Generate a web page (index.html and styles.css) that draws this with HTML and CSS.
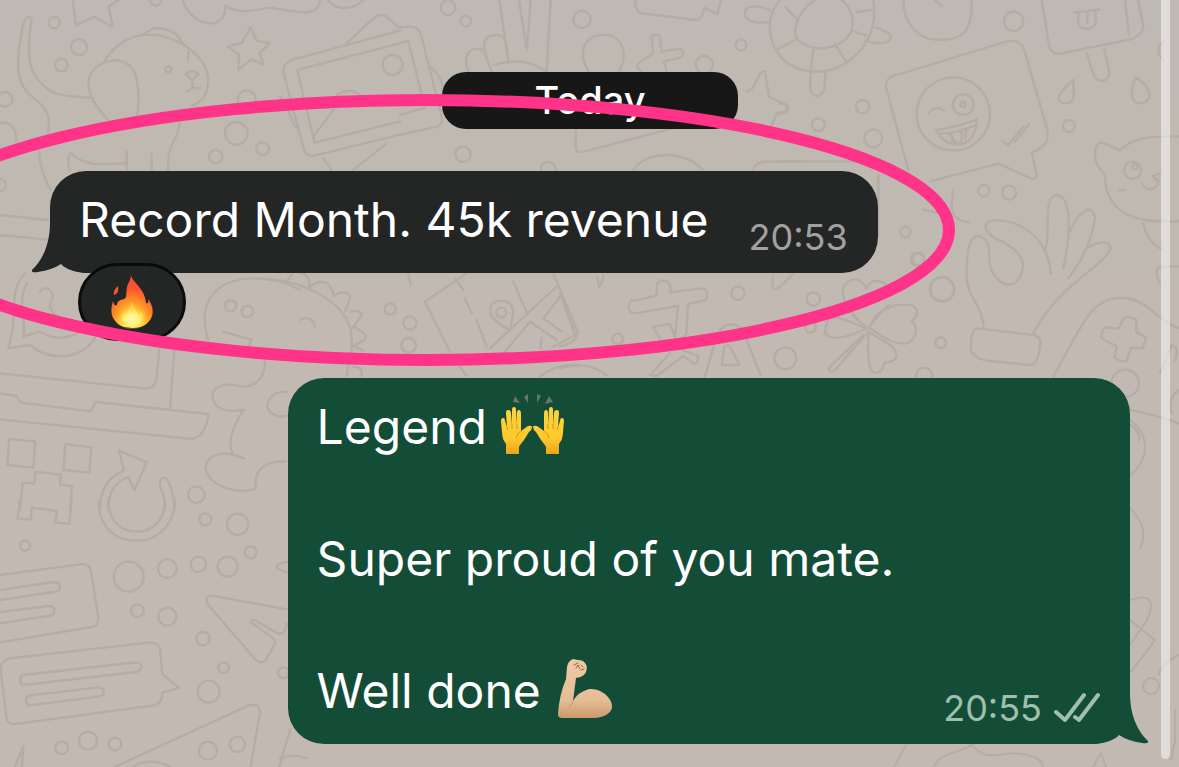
FILE: index.html
```
<!DOCTYPE html>
<html lang="en">
<head>
    <meta charset="UTF-8">
    <meta name="viewport" content="width=device-width, initial-scale=1.0">
    <title>Chat</title>
    <link rel="stylesheet" href="styles.css">
</head>
<body>
    <!-- wallpaper -->
    <svg class="wallpaper" width="1179" height="767" viewBox="0 0 1179 767" aria-hidden="true">
        <!-- dog, stars, picture frame -->
        <g transform="scale(.3333)">
            <path d="M218 0l10 76 55-26 55 30-12-60 30-20M548 0c15 45 50 70 85 70 30 0 45-25 42-52 50 25 80 15 130 5 60 5 150 40 155-23M985 0c25 35 75 30 105 0"/>
            <path d="M95 58c-10-20-25 0-30 40-20 100-15 160 35 195 50 40 50 60 45 110M95 58c-10 60-15 120 5 160 40 70 80 70 178 76M310 190c30-60 90-85 130-86 100 0 185 70 185 140 0 40-20 60-50 75M435 102c30-30 90-20 115 30M325 360c-60-60-80-120-35-160 50-35 110-20 120 40 10 50 5 70 2 110M117 455c5 60 20 90 35 115M210 513c-8-25-8-50 5-53 30 40 100 35 167 28M380 455v58M455 462v50M540 370c-10 60-40 60-35 143"/>
            <path d="M752 82l17 40 40 8-30 28 12 36-38-16-38 32 2-46-33-24 42-12z"/>
            <path d="M565 155v25M557 222c12-12 28-12 38 0l-18 20zM577 242v15M560 275c10-2 15-8 17-18 5 8 12 12 25 6"/>
            <path d="M1200 92L880 178q-35 12-28 45l60 225q8 25 35 18l253-62M1200 130L892 210l52 218 256-64M1040 130l80-75q25-20 45 0l35 30M840 290c30 30 25 60 50 95M970 475l25 35M1060 510l100-80M0 368q50-5 48 55M0 645l145 15M0 705l140 14M940 410l60-80M1010 285q40-25 70 0"/>
            <circle cx="163" cy="68" r="17"/><circle cx="237" cy="141" r="24"/><circle cx="184" cy="195" r="19"/><circle cx="15" cy="298" r="22"/><circle cx="505" cy="208" r="9"/><circle cx="0" cy="555" r="18"/>
            <circle cx="1178" cy="195" r="30"/><circle cx="740" cy="298" r="27"/><circle cx="709" cy="400" r="34"/><circle cx="647" cy="470" r="20"/><circle cx="788" cy="446" r="19"/><circle cx="467" cy="0" r="17"/>
        </g>
        <!-- victory hand, plus, plane -->
        <g transform="translate(400 0) scale(.3333)">
            <path d="M0 82c50-8 60 5 65 30l60 240q8 25-25 30L0 405M0 128l25-5 50 200-75 22M85 195q60 50 40 110"/>
            <path d="M298 0l28 190M357 0l24 150L392 0M452 0l-12 215M275 215c-25-60-40-110 15-110 30 0 30 30 35 80M250 150c-60-20-60 50-40 70M280 195c70-20 120-10 155 18M565 212c-40-65 0-108 45-108 60 0 75 60 48 108"/>
            <path d="M705 0q0 35 20 40l165 20q20-5 22-37l40 20L963 0M755 115c0-15 25-15 25 0l5 40 50-8c20-2 15 25 5 26l-48 12 8 27M715 190l45-30-5-45M725 213q-20-10-10-23"/>
            <path d="M1095 215c-20-10-28 60-55 60M1095 215l12 75 50 25q20 15-25 25l-30 60M527 390v55q5 15 25 10l260-68M700 510c40-60 150-60 210 0M1060 510q5-25 40-25h100M423 512c-5-35 45-35 45 0"/>
            <circle cx="144" cy="23" r="22"/><circle cx="198" cy="63" r="16"/><circle cx="546" cy="58" r="26"/><circle cx="913" cy="194" r="26"/><circle cx="1023" cy="135" r="16"/><circle cx="189" cy="463" r="23"/>
        </g>
        <!-- turtle, smiley bubble, ice cream, bear -->
        <g transform="translate(780 0) scale(.3333)">
            <path d="M280 0c20 130-80 215-170 215S-35 150-30 70C-30 40-15 20 0 0M45 95C50 30 110-20 160-10s70 70 50 110-80 50-110 43S45 120 45 95zM15 20l38 40M230 36l48-6M215 92l42 14M165 132l32 50M100 148l-8 64M45 120L-12 150M-30 30c-50-20-80-10-75 15s50 25 75 20M283 82q60 15 47 36t-75 4M92 215l-2 50c5 35 40 25 42 0l6-52"/>
            <path d="M370 0c0 70 45 122 110 120s98-20 95-120M465 0l22 20M785 0l22 135q5 30 35 25l210-42q40-15 38-40L1075 0M1035 0l12 105M885 38l75-10M895 42v28c5 25 52 20 52-5V32M922 40v28M920 158l20 65c10 30 50 22 48-5l-15-72"/>
            <path d="M385 510L320 270q-10-35 30-45l320-98q45-15 62 20l68 235c8 25 5 60-45 75l15 65q2 20-20 12l-95-43-205 53"/>
            <circle cx="520" cy="342" r="110"/><circle cx="550" cy="314" r="31"/><circle cx="549" cy="313" r="8"/>
            <path d="M447 342c5-20 30-22 45-10M468 390q60-8 122-32c0 95-90 95-122 32zM478 402q60-5 108-26M505 398l20 26M515 398v20c10 20 30 15 30 0v-28M560 385l-5 30M665 422l20 14 45-58M705 425l42-52"/>
            <path d="M880 240c-60 50-50 70-20 70 30-5 20-35 20-70zM1067 232c-20 50-15 80 20 78 45-20 10-60-20-78z"/>
            <path d="M975 525c-50-50-30-110 0-94l45 20c40-40 90-42 177-42M975 525c0 100 70 150 222 138M1090 670c10 50 35 70 60 80M1140 520l-22 8 18 17M1085 548c10 30 50 25 50-10M1150 180q-30-30 0-55"/>
            <circle cx="1058" cy="511" r="26"/><circle cx="1065" cy="500" r="8"/><circle cx="248" cy="320" r="20"/><circle cx="115" cy="374" r="19"/><circle cx="280" cy="415" r="27"/><circle cx="701" cy="64" r="29"/><circle cx="867" cy="378" r="18"/><circle cx="611" cy="572" r="17"/><circle cx="687" cy="578" r="21"/><circle cx="376" cy="696" r="16"/>
            <path d="M0 310c30 0 35 25 0 32M0 484h270M295 525v180M1018 570h20M520 570c-10 60-10 90 50 98M430 630l50 10"/>
        </g>
        <!-- phone bubble, laptop, robot, reload -->
        <g transform="translate(0 240) scale(.3333)">
            <path d="M75 100C20 160 60 210 25 325l65-10c60 50 150 45 195-20M80 130c-30 60 0 100-10 160l50-15c50 30 100 20 130-10M120 155c10-20 40-10 38 20-20 30 0 40 20 60"/>
            <path d="M0 400l440 46q25-2 30-30l8-90M523 332l-13 178M0 460l50 8 12 20 210 26 15-28 338 36q-5 65-50 75L0 538"/>
            <path d="M28 597l78 8-6 78-78-8zM196 612l78 10-6 76-78-8zM60 810l8-83 35 4 4-36 75 9-2 30 36 4-6 72"/>
            <path d="M300 810c0-60 25-100 72-118l-15-60 83 35-36 84-20-40c-50 20-60 60-60 99M523 810c0-50-15-90-30-98-15 2-15 15-12 30 10 20 15 40 15 68"/>
            <path d="M625 300c-30-90 0-180 130-185 60 0 110 15 145 35M795 365c0 40-20 75-70 75-50-15-90 0-88 30 8 50 60 45 95 40-30 40-55 100-30 135l30 10C650 620 610 660 618 690c15 55 110 75 150 55-10-50 25-85 90-80M860 455c-60 0-70 50-45 65s30 10 45 7M670 275l85 25-12 25"/>
            <circle cx="692" cy="197" r="17"/><circle cx="742" cy="214" r="17"/><circle cx="589" cy="764" r="25"/>
        </g>
        <!-- cards, planes, dots -->
        <g transform="translate(0 500) scale(.3333)">
            <path d="M60 0l-8 55 40 4 4-36 75 10-5 35 42 3L215 0M295 0c0 80 50 123 115 123S525 70 525 0M325 0c0 60 35 95 85 95s85-35 85-95"/>
            <path d="M0 225l240-32q30-2 33 20l22 140q0 25-20 28L0 427M0 270l160-24q20 0 20 15t-20 15L0 300M0 336l145-18q20 0 18 15t-20 15L0 370"/>
            <path d="M30 475l420-48q25 0 30 20l7 75 50 42-50 15q0 35-30 38L45 672q-20 2-25-15L2 510q0-30 28-35zM70 525l335-38q20 0 19 15-2 12-16 14L72 555q-10 0-12-14 0-14 10-16zM90 586l205-24q18 0 16 15-1 10-12 12L90 616q-10 0-12-13 0-15 12-17z"/>
            <path d="M860 328L630 286q-15 5-8 25l145 168q18 15 30 2l28-50q0-15-18-25l-55-40q0-10 15-4l65 38q25 6 28-30M345 800l400-183q35-10 35 20l-28 165M870 690l-32 110M860 185q-60 15 0 32M45 800l25-62-5 62M400 800q50-30 110 0M840 775q40-15 80 0"/>
            <circle cx="386" cy="230" r="45"/><circle cx="502" cy="206" r="28"/><circle cx="595" cy="193" r="23"/><circle cx="683" cy="200" r="30"/><circle cx="752" cy="157" r="18"/><circle cx="713" cy="73" r="32"/><circle cx="616" cy="58" r="18"/><circle cx="412" cy="332" r="19"/><circle cx="502" cy="350" r="27"/><circle cx="609" cy="416" r="20"/><circle cx="671" cy="503" r="16"/><circle cx="626" cy="575" r="33"/><circle cx="624" cy="752" r="27"/><circle cx="712" cy="733" r="23"/><circle cx="185" cy="743" r="19"/><circle cx="264" cy="722" r="27"/><circle cx="345" cy="732" r="19"/><circle cx="75" cy="137" r="15"/><circle cx="850" cy="518" r="16"/>
        </g>
        <!-- dino spikes, map -->
        <g transform="translate(180 230) scale(.3333)">
            <path d="M230 145c170 5 290 90 285 190v35M320 155l20-28M360 127c25 10 30 20 28 45M388 172c30-25 60-25 72 20M460 200c25-20 50-15 50 5l-15 40M512 245c30-5 38 5 30 15l-25 35M520 290c40 20 45 30 30 42l-30 15 30 15M360 270c20-12 40-5 45 20M505 405l-5 35M520 410q30 0 25 28"/>
            <path d="M860 130L735 215l75 150M825 145l25 35M855 205l20 45M890 270l30 80M1000 155l40 90M990 300c-75-35-75-85-25-88 50 5 32 50 25 88zM930 355l205-190M975 365l75-90 80 55M1120 130l75 180-75 40M1140 200l-50 65 55 40M840 410l20 28M1085 325l-3 30M685 135l7 28M1080 440q50-40 120-35"/>
            <circle cx="631" cy="237" r="17"/><circle cx="690" cy="279" r="20"/><circle cx="686" cy="346" r="22"/><circle cx="964" cy="248" r="15"/>
        </g>
        <!-- kanji block, clover -->
        <g transform="translate(560 230) scale(.3333)">
            <path d="M225 212l65-15v-30c5-20 35-20 40 0l2 20 95-12q20 0 12 35l-55 12-5 90-30 30M225 250q-20 0-18-22t18-16M225 250l130-22-10 90M278 290l50-8 18 38M278 290l22 35M330 370l-60 65 20 3 80-60 35 25q8-5 10-25l-50-18M435 440l30-105M560 330l42 105M485 405l8-55q12-10 20 5l25 50zM480 300q30-30 60-8M0 190l48 130q0 15-48 30M112 140l5 30q15-20 12-35M640 135q-10 60 20 35l40-38M0 415q80-25 140 20"/>
            <path d="M925 295c-60-40-95-110-65-135 20-20 45-15 60 15 15-35 55-25 65 0M930 290c20-55 80-75 130-62 20 15 10 35-5 45 25 20 10 65-20 68-50 0-75-30-105-45zM925 305c0 50-5 100 15 122 25 8 30-15 35-30 50 0 40-40 0-62zM910 315l-105 100q5 15 18 8l95-110M800 280c5-40 80 0 120 15-40 20-100 45-125 15zM935 280l50-55"/>
            <circle cx="534" cy="190" r="20"/><circle cx="760" cy="207" r="20"/><circle cx="676" cy="385" r="33"/><circle cx="1146" cy="178" r="36"/><circle cx="1142" cy="338" r="16"/><circle cx="1093" cy="438" r="25"/><circle cx="173" cy="327" r="16"/><circle cx="752" cy="292" r="16"/><circle cx="1075" cy="88" r="18"/>
        </g>
        <!-- ok hand, gamepad -->
        <g transform="translate(860 180) scale(.3333)">
            <path d="M370 440c0-60-50-90-50-150 0-50 0-120 35-122 55 10 15 85 50 120 30 40 70 30 80-10 20-60-50-85-60-95-35-10-60-40-42-58 80-20 180 40 190 155M555 210c20-40-10-160 35-165 50 5 40 130 20 220M630 155c30-70 70-85 75-40-15 90-50 140-80 180M670 215c60-50 90-20 80-5-20 50-150 100-230 250M355 445l165 20q25 5 20 30-5 60-30 60l-120-12q-50-5-58-35 0-65 23-63z"/>
            <path d="M580 590c80-140 110-240 205-236 80 0 110 75 172 90M735 442l40 4 15-30q15-12 40 5l-2 34 30 18-10 32-35-2-12 38q-15 10-38-8l8-34q-45-20-48-30 5-20 12-27zM808 690q80 15 149 40M812 735q30 20 25 45M900 580l35-85q25 10 10 45M957 630q-40 30-20 70M900 310q-20-40 0-50h57"/>
            <circle cx="796" cy="610" r="41"/><circle cx="247" cy="327" r="36"/><circle cx="172" cy="238" r="20"/>
        </g>
        <!-- right and bottom edges -->
        <path d="M1130 420c20 15 20 40 0 55M1130 508q20 20 10 40M1130 600q30-10 17 20l-17 25M1130 620l25 20-24 32M1179 655q-20 10-20 20M894 767l12-22M934 767c5-14 20-12 40-23M972 745c15 20 35 3 55 10q15 3 16 12M1093 767l8-14 5 14M1175 710v30l-4 20"/>
        <circle cx="1151" cy="686" r="8"/>
    </svg>

    <main class="chat">
        <div class="day">Today</div>

        <article class="message received">
            <p>Record Month. 45k revenue</p>
            <time class="meta" datetime="20:53">20:53</time>
            <svg class="tail" width="60" height="50" viewBox="0 0 60 50" aria-hidden="true">
                <path d="M20 0C20 20 13 37 2 47Q1 50 8 49Q22 47 31 41Q38 49 58 50L60 0Z"/>
            </svg>
        </article>

        <button class="reaction" aria-label="Fire, 1 reaction">
            <svg width="42" height="54" viewBox="0 0 42 54" aria-hidden="true">
                <defs>
                    <radialGradient id="flame" cx=".5" cy=".95" r=".95">
                        <stop offset="0" stop-color="#fff9c4"/>
                        <stop offset=".22" stop-color="#ffe04a"/>
                        <stop offset=".45" stop-color="#ff9a26"/>
                        <stop offset=".72" stop-color="#fb572e"/>
                        <stop offset="1" stop-color="#f4472f"/>
                    </radialGradient>
                    <radialGradient id="core">
                        <stop offset="0" stop-color="#fffde0"/>
                        <stop offset=".5" stop-color="#fff176"/>
                        <stop offset="1" stop-color="#ffc928" stop-opacity="0"/>
                    </radialGradient>
                </defs>
                <path fill="url(#flame)" d="M20 0C21 7 34 13 35 28C37 29 38 27 37 24C45 34 42 45 34 50C28 54 13 54 7 49C0 43-1 36 2 26C3 29 3 31 6 30C6 26 9 25 13 24C17 23 14 16 17 9C18 6 20 4 20 0Z"/>
                <path fill="#f65330" d="M7 11C8 17 6 19 3 20C2 16 4 14 7 11Z"/>
                <ellipse cx="21" cy="44" rx="15" ry="11" fill="url(#core)"/>
                <path fill="#fff27a" d="M21 26C22 32 26 35 27 40C29 40 30 38 31 36C33 44 29 51 21 52C12 51 10 44 12 38C14 40 15 41 17 41C15 36 20 32 21 26Z" opacity=".4"/>
            </svg>
        </button>

        <article class="message sent">
            <p>Legend <svg class="emoji" width="66" height="62" viewBox="0 0 66 62" role="img" aria-label="raising hands">
                <defs>
                    <linearGradient id="palm" x2="0" y2="1">
                        <stop offset="0" stop-color="#ffd33c"/>
                        <stop offset=".65" stop-color="#ffc92e"/>
                        <stop offset="1" stop-color="#eba51d"/>
                    </linearGradient>
                    <g id="hand">
                        <path fill="url(#palm)" d="M5 60V50Q1 45 1 38L0 27Q0 24 2 24Q4 24 4 27L6 33L5 19Q5 16 7 16Q10 16 10 19L11 31V16Q11 13 13 13Q15 13 15 16L16 31L16 19Q16 16 18 16Q20 16 20 20V37L27 32Q31 31 31 33Q31 36 28 38L23 46Q19 51 18 53V60Z"/>
                        <path fill="none" stroke="#d9951c" stroke-width="1" d="M6 33l1 3M11 30v5M16 30v5M20 37q-4 2-5 7"/>
                    </g>
                </defs>
                <use href="#hand" x="1"/>
                <use href="#hand" transform="translate(64 0) scale(-1 1)"/>
                <path fill="#68746d" d="M15 2l5 7-7-1zM28 0v9l-4-6zM37 0l4 2-4 7zM49 2l4 6-8 2z"/>
            </svg><br><br>Super proud of you mate.<br><br>Well done <svg class="emoji" width="60" height="62" viewBox="0 0 60 62" role="img" aria-label="flexed biceps">
                <defs>
                    <linearGradient id="skin" x2="0" y2="1">
                        <stop offset="0" stop-color="#edcaa6"/>
                        <stop offset=".7" stop-color="#e5bd94"/>
                        <stop offset="1" stop-color="#c99a6c"/>
                    </linearGradient>
                </defs>
                <path fill="url(#skin)" d="M13 9Q14 3 19 1L24 2Q29 2 31 5Q34 8 32 14Q30 19 22 20L19 43Q24 34 35 31Q46 30 54 39Q61 48 56 54Q50 60 38 60L8 60Q4 60 4 56Q5 38 12 21Z"/>
                <path fill="none" stroke="#a85f48" stroke-width="1" stroke-linecap="round" d="M20 7l4-2M22 10l2-3 2 4M27 7l2 2M27 12l3-1"/>
                <path fill="none" stroke="#c59768" stroke-width="1" d="M19 43q-1 3-4 6"/>
            </svg></p>
            <div class="meta">
                <time datetime="20:55">20:55</time>
                <svg width="46" height="32" viewBox="0 0 46 32" role="img" aria-label="Delivered">
                    <path class="ticks" d="M2 20l9 8L30 3M21 25l4 3L44 3"/>
                </svg>
            </div>
            <svg class="tail" width="60" height="50" viewBox="0 0 60 50" aria-hidden="true">
                <path d="M40 0C40 20 47 37 58 47Q59 50 52 49Q38 47 29 41Q22 49 2 50L0 0Z"/>
            </svg>
        </article>
    </main>

    <!-- hand-drawn highlight round the first message -->
    <svg class="highlight" width="960" height="372" viewBox="0 0 960 372" aria-hidden="true">
        <ellipse cx="427" cy="230" rx="522" ry="130"/>
    </svg>
    <div class="scroll-thumb"></div>
</body>
</html>
```
FILE: styles.css
```
:root {
    --wallpaper: #c1b9b2;
    --doodle: #b4aca5;
    --received: #242625;
    --sent: #144d37;
    --highlight: #ff3388;
}
* {
    box-sizing: border-box;
}
body {
    position: relative;
    margin: 0;
    min-height: 100vh;
    overflow: hidden;
    font-family: Inter, "Liberation Sans", sans-serif;
    color: #fff;
    background: linear-gradient(#beb9b2, var(--wallpaper) 45%);
}
.wallpaper {
    position: absolute;
    top: 0;
    left: 0;
    fill: none;
    stroke: var(--doodle);
    stroke-width: 2;
    stroke-linejoin: round;
    stroke-linecap: round;
}
.wallpaper g {
    stroke-width: 7;
}
.chat {
    position: relative;
    display: flex;
    flex-direction: column;
    align-items: flex-start;
    padding: 72px 49px 24px 50px;
}
.day {
    align-self: center;
    width: 296px;
    margin-bottom: 42px;
    border-radius: 24px;
    background: #171717;
    font-size: 38px;
    font-weight: 500;
    line-height: 57px;
    text-align: center;
}
.message {
    position: relative;
    z-index: 0;
    display: flex;
    padding: 16px 30px 18px 29px;
    border-radius: 36px;
    font-size: 48px;
    line-height: 66px;
}
.message p {
    margin: 0;
}
.received {
    gap: 40px;
    background: var(--received);
    min-height: 102px;
}
.sent {
    align-self: flex-end;
    justify-content: space-between;
    width: 78%;
    min-height: 366px;
    background: var(--sent);
}
.meta {
    display: flex;
    align-self: flex-end;
    align-items: center;
    gap: 12px;
    font-size: 36px;
    line-height: 36px;
    color: #a0a1a0;
}
.sent .meta {
    color: #9fbfaf;
}
.ticks {
    fill: none;
    stroke: currentColor;
    stroke-width: 4;
    stroke-linecap: round;
    stroke-linejoin: round;
}
/* sits under the text, over the bubble background */
.tail {
    position: absolute;
    z-index: -1;
    bottom: 0;
}
.received .tail {
    left: -20px;
    fill: var(--received);
}
.sent .tail {
    right: -20px;
    fill: var(--sent);
}
.emoji {
    vertical-align: -12px;
}
.reaction {
    position: relative;
    z-index: 1;
    display: flex;
    align-items: center;
    justify-content: center;
    width: 108px;
    height: 78px;
    margin: -10px 0 37px 28px;
    padding: 0;
    border: 3px solid #0a0b0b;
    border-radius: 39px;
    background: var(--received);
}
.highlight {
    position: absolute;
    top: 0;
    left: 0;
    z-index: 2;
    fill: none;
    stroke: var(--highlight);
    stroke-width: 12;
    pointer-events: none;
}
.scroll-thumb {
    position: absolute;
    top: 0;
    right: 9px;
    bottom: 9px;
    width: 9px;
    border-radius: 0 0 5px 5px;
    background: rgba(255, 255, 255, 0.5);
}
```
